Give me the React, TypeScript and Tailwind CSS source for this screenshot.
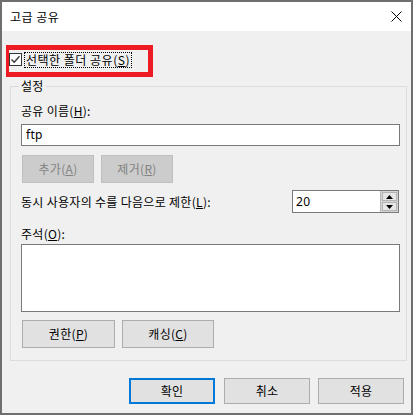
import React from "react";

const font = { fontFamily: '"Noto Sans CJK KR", "Noto Sans", sans-serif' };

function Btn({ children, w, disabled, primary }: { children: React.ReactNode; w: string; disabled?: boolean; primary?: boolean }) {
  const base = "h-full flex items-center justify-center text-[12px] leading-none tracking-[0.3px]";
  let cls = "border border-[#adadad] bg-[#e1e1e1] text-black";
  if (disabled) cls = "border border-[#bfbfbf] bg-[#cccccc] text-[#838383]";
  if (primary) cls = "border-2 border-[#0078d7] bg-[#e1e1e1] text-black";
  return <div className={`${base} ${cls} ${w}`}>{children}</div>;
}

export default function App() {
  return (
    <div className="w-[414px] h-[417px] bg-white overflow-hidden" style={font}>
      <div className="w-[413px] h-[415px] border-2 border-[#6f6f6f] bg-[#f0f0f0] flex flex-col">
        {/* title bar */}
        <div className="h-[29px] bg-white flex items-center justify-between pl-[8px] pr-[8px] shrink-0">
          <span className="text-[12px] tracking-[0.5px] text-black">고급 공유</span>
          <svg width="11" height="11" viewBox="0 0 11 11" className="mr-[1px]">
            <path d="M0.5 0.5 L10.5 10.5 M10.5 0.5 L0.5 10.5" stroke="#000" strokeWidth="1" />
          </svg>
        </div>

        {/* red highlighted checkbox */}
        <div className="ml-[4px] mt-[14px] w-[147px] h-[32px] border-t-[5px] border-l-[3px] border-r-[5px] border-b-[5px] border-[#ed1c24] flex items-start pt-[3px]">
          <div className="w-[13px] h-[13px] border border-[#333333] bg-white flex items-center justify-center">
            <svg width="11" height="11" viewBox="0 0 11 11">
              <path d="M1.5 5.5 L4.2 8.3 L9.5 2.2" stroke="#333" strokeWidth="1.3" fill="none" />
            </svg>
          </div>
          <div className="ml-[2px] -mt-[1px] h-[16px] px-[1px] border border-dotted border-black flex items-center text-[12px] leading-none tracking-[0.5px] text-black">
            선택한 폴더 공유(<u>S</u>)
          </div>
        </div>

        {/* group box */}
        <div className="relative ml-[8px] mt-[9px] w-[397px] h-[275px] border border-[#dcdcdc] pl-[10px] pr-[6px] flex flex-col tracking-[0.3px]">
          <span className="absolute -top-[9px] left-[8px] bg-[#f0f0f0] px-[2px] text-[12px] leading-[16px] text-black">설정</span>

          <div className="mt-[16px] h-[16px] flex items-center text-[12px] text-black">
            공유 이름(<u>H</u>):
          </div>
          <div className="mt-[5px] h-[22px] border border-[#7a7a7a] bg-white flex items-center px-[4px] text-[12px] text-black" style={{ fontFamily: '"Noto Sans", "Noto Sans CJK KR", sans-serif' }}>
            ftp
          </div>

          <div className="mt-[9px] h-[28px] ml-[1px] flex gap-[7px]">
            <Btn w="w-[72px]" disabled>추가(<u>A</u>)</Btn>
            <Btn w="w-[72px]" disabled>제거(<u>R</u>)</Btn>
          </div>

          <div className="mt-[7px] h-[23px] flex items-center justify-between pr-[1px]">
            <span className="text-[12px] text-black">동시 사용자의 수를 다음으로 제한(<u>L</u>):</span>
            <div className="w-[107px] h-full border border-[#7a7a7a] bg-white flex">
              <div className="flex-1 flex items-center pl-[3px] text-[12px] text-black" style={{ fontFamily: '"Noto Sans", sans-serif' }}>20</div>
              <div className="w-[18px] flex flex-col gap-[1px] bg-[#d4d4d4] border-l border-[#b8b8b8] p-[1px]">
                <div className="flex-1 bg-[#e6e6e6] border border-[#b4b4b4] flex items-center justify-center">
                  <svg width="7" height="4" viewBox="0 0 7 4"><path d="M0 4 L3.5 0 L7 4 Z" fill="#000" /></svg>
                </div>
                <div className="flex-1 bg-[#e6e6e6] border border-[#b4b4b4] flex items-center justify-center">
                  <svg width="7" height="4" viewBox="0 0 7 4"><path d="M0 0 L3.5 4 L7 0 Z" fill="#000" /></svg>
                </div>
              </div>
            </div>
          </div>

          <div className="mt-[13px] h-[16px] flex items-center text-[12px] text-black">
            주석(<u>O</u>):
          </div>
          <div className="mt-[2px] h-[68px] border border-[#7a7a7a] bg-white"></div>

          <div className="mt-[8px] h-[28px] ml-[1px] flex gap-[7px]">
            <Btn w="w-[93px]">권한(<u>P</u>)</Btn>
            <Btn w="w-[92px]">캐싱(<u>C</u>)</Btn>
          </div>
        </div>

        {/* bottom buttons */}
        <div className="mt-[17px] h-[26px] flex justify-end gap-[9px] pr-[7px]">
          <Btn w="w-[86px]" primary>확인</Btn>
          <div className="flex gap-[8px] h-full">
            <Btn w="w-[86px]">취소</Btn>
            <Btn w="w-[86px]">적용</Btn>
          </div>
        </div>
      </div>
    </div>
  );
}
